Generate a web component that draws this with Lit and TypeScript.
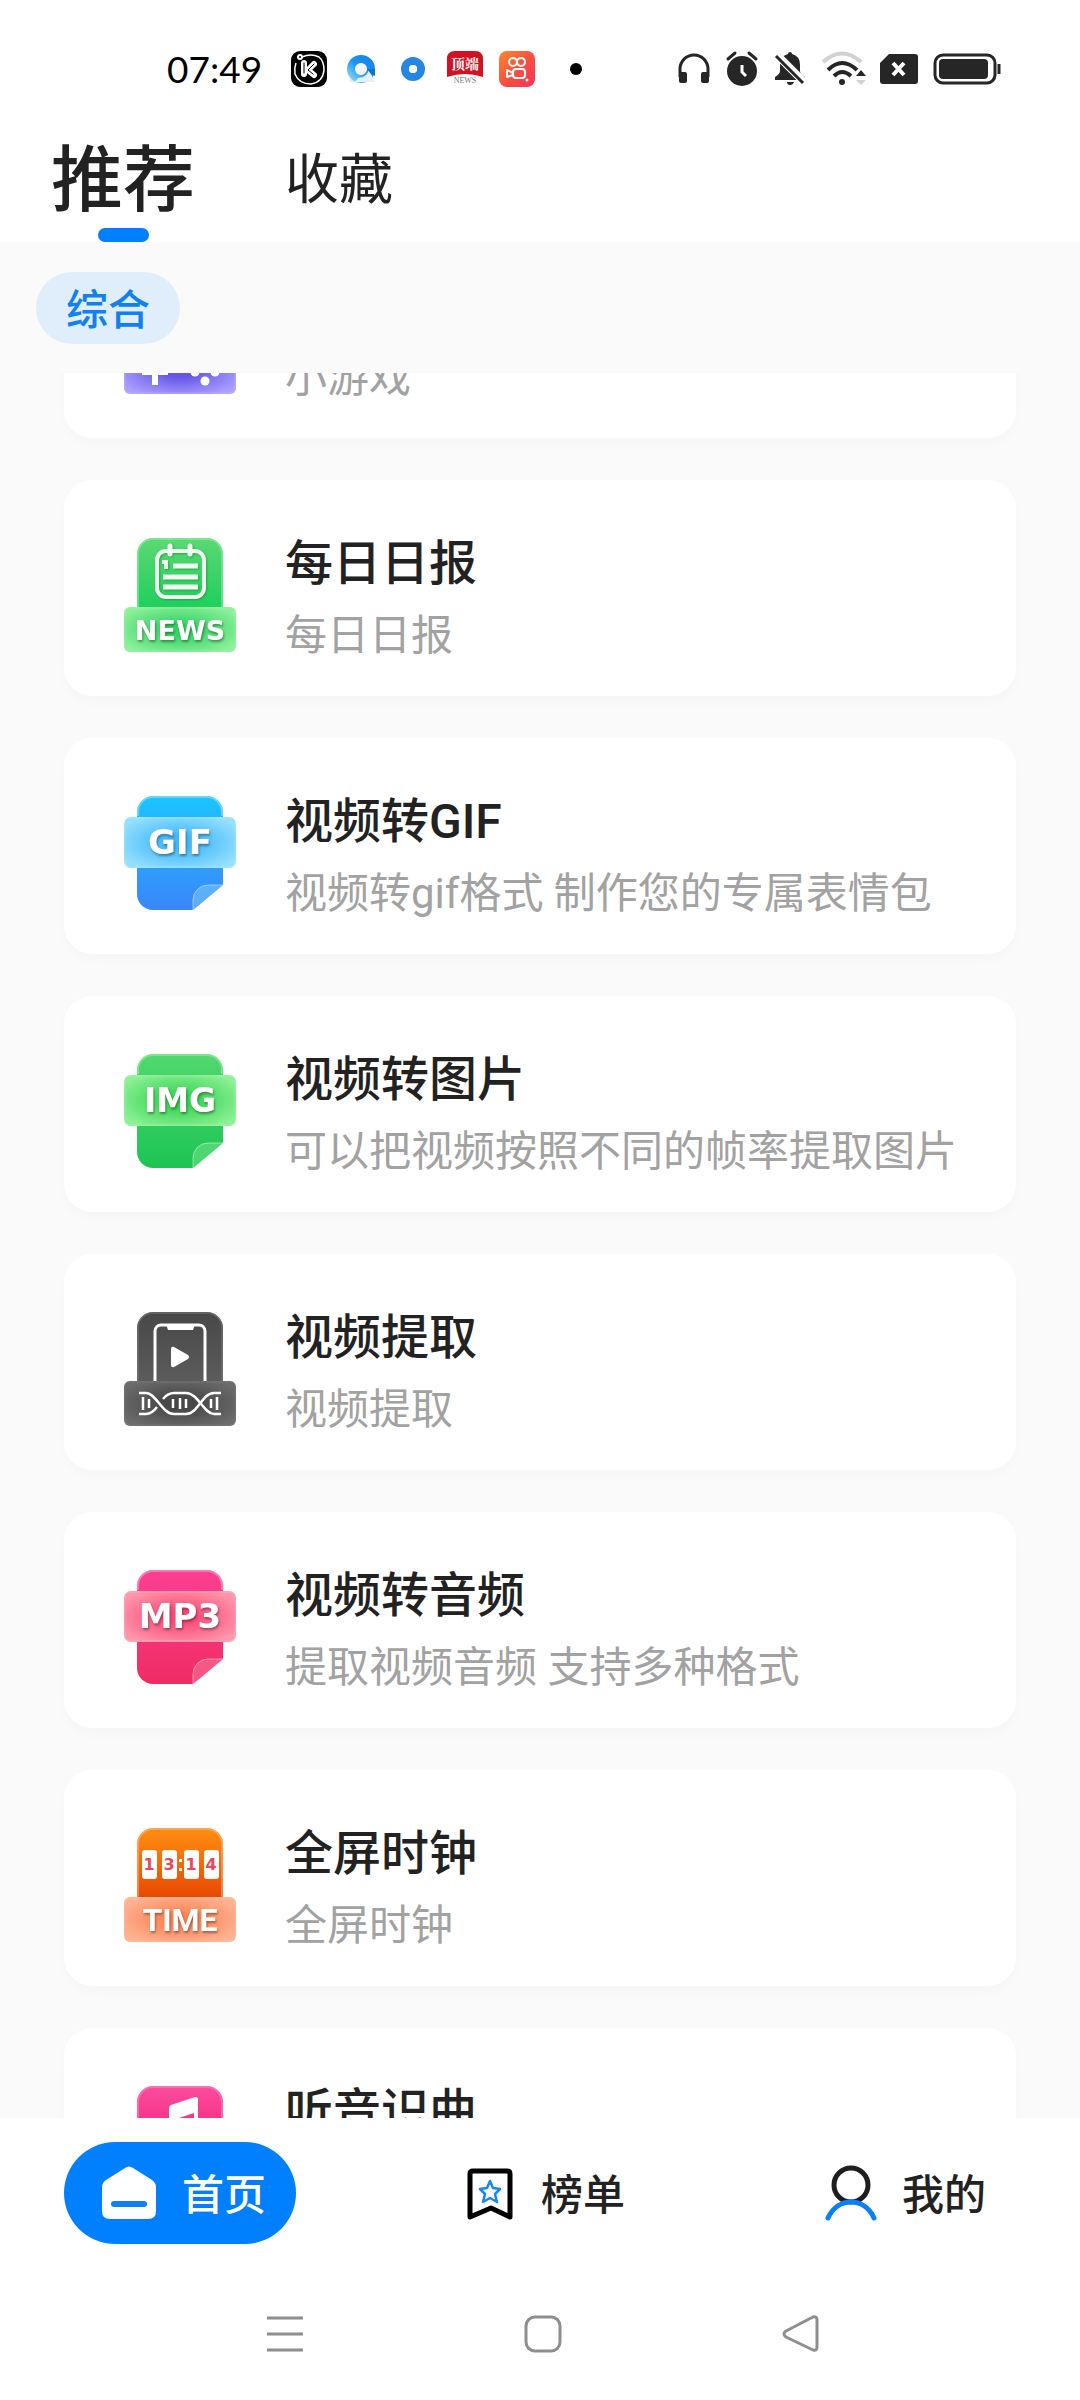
import { LitElement, html, svg, css, SVGTemplateResult } from "lit";
import { customElement, state, query } from "lit/decorators.js";

interface Tool {
  title: string;
  note: string;
  icon: SVGTemplateResult;
}

interface Palette {
  id: string;
  top: string;
  bottom: string;
  edge: string;
  middle: string;
  rim: string;
}

/* Gradients shared by the body and the band of one tile. */
const paints = (p: Palette) => svg`
  <defs>
    <linearGradient id="${p.id}-body" x1="0" y1="0" x2="0" y2="1">
      <stop offset="0" stop-color="${p.top}" />
      <stop offset="1" stop-color="${p.bottom}" />
    </linearGradient>
    <radialGradient id="${p.id}-band" cx="0.5" cy="0.5" r="0.6">
      <stop offset="0.2" stop-color="${p.middle}" />
      <stop offset="1" stop-color="${p.edge}" />
    </radialGradient>
  </defs>`;

/* A file with a folded corner and a label band across it. */
const fileTile = (p: Palette, label: string, size: number) => svg`
  ${paints(p)}
  <path d="M33 0H87A16 16 0 0 1 103 16V89L73 114H33A16 16 0 0 1 17 98V16A16 16 0 0 1 33 0Z" fill="url(#${p.id}-body)" />
  <path d="M18 20V16A15 15 0 0 1 33 1H87A15 15 0 0 1 102 16V20" fill="none" stroke="${p.rim}" stroke-opacity="0.5" stroke-width="2" />
  <path d="M73 114V104A15 15 0 0 1 88 89H103Z" fill="${p.edge}" fill-opacity="0.4" />
  <path d="M73 114V104A15 15 0 0 1 88 89H103" fill="none" stroke="#fff" stroke-opacity="0.45" stroke-width="1" />
  <rect x="4" y="21" width="112" height="51" rx="7" fill="url(#${p.id}-band)" />
  <rect x="5" y="22" width="110" height="49" rx="6" fill="none" stroke="${p.rim}" stroke-opacity="0.6" stroke-width="1" />
  <text class="label" x="60" y="58" font-size="${size}">${label}</text>`;

/* An arched plate standing behind a band. */
const plateTile = (p: Palette, art: SVGTemplateResult) => svg`
  ${paints(p)}
  <path d="M33 0H87A16 16 0 0 1 103 16V72H17V16A16 16 0 0 1 33 0Z" fill="url(#${p.id}-body)" />
  <path d="M18 69V16A15 15 0 0 1 33 1H87A15 15 0 0 1 102 16V69" fill="none" stroke="${p.rim}" stroke-opacity="0.45" stroke-width="2" />
  <rect x="4" y="69" width="112" height="45" rx="6" fill="url(#${p.id}-band)" />
  <rect x="5" y="70" width="110" height="43" rx="5" fill="none" stroke="${p.rim}" stroke-opacity="0.5" stroke-width="1" />
  ${art}`;

const flap = (x: number, digit: string) => svg`
  <rect x="${x}" y="22" width="15" height="29" rx="3" fill="#fff" />
  <text class="digit" x="${x + 7}" y="42">${digit}</text>`;

const tools: Tool[] = [
  {
    title: "小游戏",
    note: "小游戏",
    icon: plateTile(
      { id: "game", top: "#9a8cff", bottom: "#6a55ee", edge: "#aaa0ff", middle: "#6556e6", rim: "#c8c0ff" },
      svg`
        <path d="M35 79V105M22 92H48" stroke="#fff" stroke-width="6" />
        <circle cx="85" cy="82" r="4.500" fill="#fff" /><circle cx="75" cy="92" r="4.500" fill="#fff" />
        <circle cx="95" cy="92" r="4.500" fill="#fff" /><circle cx="85" cy="101" r="4.500" fill="#fff" />`,
    ),
  },
  {
    title: "每日日报",
    note: "每日日报",
    icon: plateTile(
      { id: "news", top: "#5bd873", bottom: "#1dcf5c", edge: "#8df09a", middle: "#35d367", rim: "#a4f5b0" },
      svg`
        <g class="art">
          <rect x="37" y="13" width="47" height="46" rx="9" fill="none" stroke="#f0fff2" stroke-width="4" />
          <path d="M50 8V16M70 8V16" stroke="#f0fff2" stroke-width="5" stroke-linecap="round" />
          <path d="M53 28H78M43 39H78M43 49H78" stroke="#f0fff2" stroke-width="5" />
          <path d="M42 24H46V31" fill="none" stroke="#f0fff2" stroke-width="4" />
        </g>
        <text class="label" x="60" y="102" font-size="27">NEWS</text>`,
    ),
  },
  {
    title: "视频转GIF",
    note: "视频转gif格式 制作您的专属表情包",
    icon: fileTile({ id: "gif", top: "#1cc4ff", bottom: "#3a86fa", edge: "#96e0fd", middle: "#40b8fb", rim: "#a5ecff" }, "GIF", 34),
  },
  {
    title: "视频转图片",
    note: "可以把视频按照不同的帧率提取图片",
    icon: fileTile({ id: "img", top: "#52d86e", bottom: "#1cc454", edge: "#8df095", middle: "#38d554", rim: "#a8f5b0" }, "IMG", 33),
  },
  {
    title: "视频提取",
    note: "视频提取",
    icon: plateTile(
      { id: "extract", top: "#484848", bottom: "#5c5c5c", edge: "#6c6c6c", middle: "#474747", rim: "#808080" },
      svg`
        <path d="M35 69V19A6 6 0 0 1 41 13H79A6 6 0 0 1 85 19V69" fill="none" stroke="#fff" stroke-width="3" />
        <path d="M46 12H75L73 18H48Z" fill="#fff" />
        <path d="M51 37Q51 34 54 35L68 43Q70 45 68 47L54 55Q51 56 51 53Z" fill="#fff" />
        <g fill="none" stroke="#fff" stroke-width="2.500">
          <path d="M19 81H26C36 81 42 102 54 102H66C78 102 82 81 94 81H101" />
          <path d="M19 102H26C30 102 34 99 37 95M43 87C46 83 50 81 54 81H66C78 81 84 102 94 102H101" />
          <path d="M23 85V98M29 87V96M53 87V96M60 86V97M66 87V96M91 87V96M97 85V98" />
        </g>`,
    ),
  },
  {
    title: "视频转音频",
    note: "提取视频音频 支持多种格式",
    icon: fileTile({ id: "mp3", top: "#fb3f93", bottom: "#f02c63", edge: "#ff97ab", middle: "#fa4a78", rim: "#ffb4c4" }, "MP3", 34),
  },
  {
    title: "全屏时钟",
    note: "全屏时钟",
    icon: plateTile(
      { id: "time", top: "#ff8f12", bottom: "#e84600", edge: "#ffb496", middle: "#fb8454", rim: "#ffc4a0" },
      svg`
        ${flap(22, "1")}${flap(42, "3")}${flap(64, "1")}${flap(84, "4")}
        <rect x="59" y="31" width="3" height="3" fill="#fff" /><rect x="59" y="40" width="3" height="3" fill="#fff" />
        <text class="label narrow" x="60" y="103" font-size="32">TIME</text>`,
    ),
  },
  {
    title: "听音识曲",
    note: "听音识曲",
    icon: plateTile(
      { id: "song", top: "#fb4ca0", bottom: "#f51c6c", edge: "#ff9ab4", middle: "#fb4a80", rim: "#ff9acb" },
      svg`
        <path d="M49 22Q49 20 51 19L75 11Q78 11 78 13V52H74V27L53 34V60H49Z" fill="#fff" />
        <circle cx="45" cy="60" r="8" fill="#fff" /><circle cx="70" cy="53" r="8" fill="#fff" />`,
    ),
  },
];

const homeIcon = svg`
  <path d="M23 2Q27 -1 31 2L50 14Q54 17 54 21V45Q54 53 46 53H8Q0 53 0 45V21Q0 17 4 14Z" fill="#fff" />
  <path d="M12 38H42" stroke="#0f80f2" stroke-width="6" stroke-linecap="round" />`;

const rankIcon = svg`
  <path d="M6 5H40Q43 5 43 8V51L24 42L3 51V8Q3 5 6 5Z" fill="none" stroke="#000" stroke-width="5" stroke-linejoin="round" />
  <path d="M23 15L26 22L33 23L28 28L30 36L23 32L16 36L18 28L13 23L20 22Z" fill="none" stroke="#1687f5" stroke-width="2.500" stroke-linejoin="round" />`;

const mineIcon = svg`
  <circle cx="25" cy="19" r="17" fill="none" stroke="#1e1e1e" stroke-width="5" />
  <path d="M2 52C7 41 16 36 25 36S43 41 48 52" fill="none" stroke="#0a80f8" stroke-width="5" stroke-linecap="round" />`;

const sections = [
  { name: "首页", icon: homeIcon, box: "0 0 54 54", kind: "wide" },
  { name: "榜单", icon: rankIcon, box: "0 0 48 54", kind: "slim" },
  { name: "我的", icon: mineIcon, box: "0 0 50 54", kind: "medium" },
];

@customElement("status-bar")
export class StatusBar extends LitElement {
  static styles = css`
    :host { display: block; }
    .bar { display: flex; align-items: center; justify-content: space-between; height: 138px; padding: 0 80px 0 167px; box-sizing: border-box; }
    .group { display: flex; align-items: center; }
    .apps { gap: 16px; }
    .signals { gap: 12px; }
    .clock { font: 400 37px/48px Lato, "Open Sans", sans-serif; color: #000; width: 108px; }
    svg { display: block; height: 36px; width: 36px; flex: none; overflow: visible; }
    .more { width: 50px; }
    .wifi { width: 48px; }
    .sim { width: 38px; }
    .battery { width: 70px; }
    .brand { font: 700 14px "Noto Serif CJK SC", "Noto Sans CJK SC", serif; text-anchor: middle; fill: #fff; }
    .press { font: 400 8px "Liberation Serif", serif; text-anchor: middle; fill: #777; }
  `;

  render() {
    return html`
      <div class="bar">
        <div class="group apps">
          <time class="clock">07:49</time>
          <svg viewBox="0 0 36 36" aria-hidden="true">
            <rect width="36" height="36" rx="9" fill="#000" />
            <path d="M11 6Q20 2 28 6Q33 10 33 19Q32 31 20 33Q8 33 4 23Q3 17 5 12" fill="none" stroke="#fff" stroke-width="1.500" />
            <circle cx="9" cy="6" r="3" fill="#fff" /><circle cx="9" cy="6" r="1" fill="#000" />
            <path d="M13 12V23M23 13L17 19L23 24" fill="none" stroke="#fff" stroke-width="6" stroke-linecap="round" stroke-linejoin="round" />
            <path d="M13 12V22M23 13L17 19L22 23" fill="none" stroke="#000" stroke-width="1" stroke-linecap="round" />
          </svg>
          <svg viewBox="0 0 36 36" aria-hidden="true">
            <defs><linearGradient id="q" x1="0" y1="1" x2="1" y2="0"><stop offset="0" stop-color="#7fd2f7" /><stop offset="0.500" stop-color="#1c93f2" /><stop offset="1" stop-color="#1586f0" /></linearGradient></defs>
            <path d="M8 28Q20 24 31 31H8Q4 30 8 28Z" fill="#dceefa" />
            <circle cx="18" cy="18" r="10" fill="none" stroke="url(#q)" stroke-width="8" />
            <path d="M15 27Q23 27 26 19L32 31H12Z" fill="#e4f1fb" />
            <path d="M24 18H32V25L28 23Z" fill="#1470cf" />
            <circle cx="18" cy="18" r="5" fill="#f2f6fa" />
          </svg>
          <svg viewBox="0 0 36 36" aria-hidden="true">
            <circle cx="18" cy="18" r="8" fill="none" stroke="#2587e4" stroke-width="8" />
            <circle cx="18" cy="18" r="4" fill="#fff" />
          </svg>
          <svg viewBox="0 0 36 36" aria-hidden="true">
            <path d="M8 0H28Q36 0 36 8V26Q18 20 0 26V8Q0 0 8 0Z" fill="#cf1322" />
            <text class="brand" x="18" y="18">顶端</text>
            <text class="press" x="18" y="32">NEWS</text>
          </svg>
          <svg viewBox="0 0 36 36" aria-hidden="true">
            <defs><linearGradient id="k" x1="0" y1="0" x2="1" y2="1"><stop offset="0" stop-color="#fb8a2a" /><stop offset="0.500" stop-color="#f95040" /><stop offset="1" stop-color="#f5305c" /></linearGradient></defs>
            <rect width="36" height="36" rx="8" fill="url(#k)" />
            <g fill="none" stroke="#fff" stroke-width="2">
              <circle cx="14" cy="11" r="4" /><circle cx="22" cy="11" r="4" />
              <rect x="14" y="18" width="12" height="9" rx="3" />
              <path d="M14 22L8 19V26L14 24" stroke-linejoin="round" />
            </g>
            <circle cx="28" cy="29" r="1.500" fill="#fff" />
          </svg>
          <svg class="more" viewBox="0 0 50 36" aria-hidden="true"><circle cx="25" cy="18" r="6" fill="#000" /></svg>
        </div>
        <div class="group signals">
          <svg viewBox="0 0 36 36" aria-hidden="true">
            <path d="M4 26V18A14 14 0 0 1 32 18V26" fill="none" stroke="#262626" stroke-width="3" />
            <rect x="3" y="21" width="8" height="11" rx="2" fill="#262626" /><rect x="25" y="21" width="8" height="11" rx="2" fill="#262626" />
          </svg>
          <svg viewBox="0 0 36 36" aria-hidden="true">
            <circle cx="18" cy="20" r="15" fill="#262626" />
            <path d="M4 8L11 2M32 8L25 2" stroke="#262626" stroke-width="3" stroke-linecap="round" />
            <path d="M18 14V21L22 25" fill="none" stroke="#fff" stroke-width="3" />
          </svg>
          <svg viewBox="0 0 36 36" aria-hidden="true">
            <path d="M18 1Q20 1 20 3Q28 5 28 14V20Q28 23 33 26V29H3V26Q8 23 8 20V14Q8 5 16 3Q16 1 18 1Z" fill="#262626" />
            <path d="M15 31H22Q21 34 18 34T15 31Z" fill="#262626" />
            <path d="M3 2L34 33" stroke="#fff" stroke-width="8" />
            <path d="M4 5L31 32" stroke="#262626" stroke-width="3" />
          </svg>
          <svg class="wifi" viewBox="0 0 48 36" aria-hidden="true">
            <path d="M3 11Q22 -6 41 11" fill="none" stroke="#d2d2d2" stroke-width="4" />
            <path d="M8 19Q22 5 37 19" fill="none" stroke="#262626" stroke-width="4" />
            <path d="M14 25Q22 17 31 25" fill="none" stroke="#262626" stroke-width="4" />
            <circle cx="22" cy="31" r="3" fill="#262626" />
            <path d="M36 25L41 19L46 25Z" fill="#262626" /><path d="M36 29L41 34L46 29Z" fill="#d2d2d2" />
          </svg>
          <svg class="sim" viewBox="0 0 38 36" aria-hidden="true">
            <path d="M9 3H35Q38 3 38 6V30Q38 33 35 33H3Q0 33 0 30V12Z" fill="#262626" />
            <path d="M13 12L24 24M24 12L13 24" stroke="#fff" stroke-width="4" />
          </svg>
          <svg class="battery" viewBox="0 0 70 36" aria-hidden="true">
            <rect x="5" y="4" width="60" height="28" rx="8" fill="none" stroke="#262626" stroke-width="3" />
            <rect x="9" y="8" width="49" height="20" rx="4" fill="#262626" />
            <path d="M69 13V23" stroke="#262626" stroke-width="3" />
          </svg>
        </div>
      </div>`;
  }
}

@customElement("tool-card")
export class ToolCard extends LitElement {
  static properties = { tool: { attribute: false } };
  declare tool: Tool;

  static styles = css`
    :host { display: block; }
    .card { display: flex; align-items: flex-start; gap: 45px; padding: 48px 40px 24px 56px; border-radius: 28px; background: #fff; box-shadow: 0 6px 12px rgba(0, 0, 0, 0.02); color: #222; text-decoration: none; }
    .icon { display: block; flex: none; width: 120px; height: 120px; margin-top: 10px; overflow: visible; }
    .words { min-width: 0; font-family: Roboto, "Noto Sans CJK SC", sans-serif; }
    .title { margin: 0; font-size: 48px; line-height: 72px; font-weight: 500; }
    .note { margin: 0; font-size: 42px; line-height: 72px; font-weight: 400; color: #a2a2a2; white-space: nowrap; overflow: hidden; text-overflow: ellipsis; }
    .label { font-family: "DejaVu Sans", sans-serif; font-weight: 700; text-anchor: middle; fill: #fff; filter: drop-shadow(1px 2px 1px rgba(0, 0, 0, 0.35)); }
    .narrow { font-family: Roboto, sans-serif; }
    .digit { font: 700 16px "DejaVu Sans", sans-serif; text-anchor: middle; fill: #ee4557; }
    .art { filter: drop-shadow(1px 1px 1px rgba(0, 80, 20, 0.35)); }
  `;

  render() {
    return html`
      <a class="card" href="#">
        <svg class="icon" viewBox="0 0 120 120" aria-hidden="true">${this.tool.icon}</svg>
        <div class="words">
          <h2 class="title">${this.tool.title}</h2>
          <p class="note">${this.tool.note}</p>
        </div>
      </a>`;
  }
}

@customElement("app-root")
export class AppRoot extends LitElement {
  @state() private tab = "推荐";
  @state() private section = "首页";
  @query(".list") private list!: HTMLElement;

  static styles = css`
    :host { display: block; font-family: Roboto, "Noto Sans CJK SC", sans-serif; color: #222; }
    .screen { display: flex; flex-direction: column; height: 100vh; background: #fafafa; }
    button { border: 0; margin: 0; padding: 0; background: none; font: inherit; color: inherit; cursor: pointer; }
    .top { background: #fff; flex: none; }
    .tabs { display: flex; gap: 90px; padding: 3px 51px 0; }
    .tab { display: flex; flex-direction: column; align-items: center; gap: 7px; font-size: 54px; line-height: 80px; }
    .tab::after { content: ""; width: 51px; height: 14px; border-radius: 7px; }
    .tab.on { font-size: 72px; font-weight: 500; }
    .tab.on::after { background: #0080ff; }
    .filters { display: flex; flex: none; padding: 30px 36px 29px; }
    .chip { height: 72px; padding: 6px 30px 0; border-radius: 36px; background: #e0eefc; color: #1080f5; font-size: 42px; line-height: 66px; font-weight: 500; }
    .list { flex: 1; min-height: 0; overflow-y: auto; scrollbar-width: none; display: flex; flex-direction: column; gap: 42px; padding: 0 64px; margin: 0; list-style: none; }
    .list::-webkit-scrollbar { display: none; }
    .item { flex: none; }
    .bottom { flex: none; background: #fff; }
    .sections { display: flex; justify-content: space-between; padding: 24px 64px; }
    .section { display: flex; align-items: center; gap: 26px; height: 102px; padding: 0 30px 0 38px; border-radius: 51px; font-size: 42px; font-weight: 500; line-height: 60px; }
    .section.on { background: #0080ff; color: #fff; }
    .name { padding-top: 6px; }
    .glyph { display: block; height: 54px; overflow: visible; }
    .wide { width: 54px; }
    .slim { width: 48px; }
    .medium { width: 50px; }
    .keys { display: flex; justify-content: space-between; padding: 48px 262px 48px 267px; }
    .key { display: block; width: 36px; height: 36px; }
    .key svg { display: block; width: 36px; height: 36px; overflow: visible; fill: none; stroke: #8e8e8e; stroke-width: 3; stroke-linejoin: round; }
  `;

  firstUpdated() {
    requestAnimationFrame(() => {
      this.list.scrollTop = 151;
    });
  }

  render() {
    return html`
      <div class="screen">
        <header class="top">
          <status-bar></status-bar>
          <nav class="tabs">
            ${["推荐", "收藏"].map(
              (name) => html`<button class="tab ${name === this.tab ? "on" : ""}" @click=${() => (this.tab = name)}>${name}</button>`,
            )}
          </nav>
        </header>
        <div class="filters"><button class="chip">综合</button></div>
        <ul class="list">
          ${tools.map((tool) => html`<li class="item"><tool-card .tool=${tool}></tool-card></li>`)}
        </ul>
        <footer class="bottom">
          <nav class="sections">
            ${sections.map(
              (s) => html`
                <button class="section ${s.name === this.section ? "on" : ""}" @click=${() => (this.section = s.name)}>
                  <svg class="glyph ${s.kind}" viewBox="${s.box}" aria-hidden="true">${s.icon}</svg>
                  <span class="name">${s.name}</span>
                </button>`,
            )}
          </nav>
          <div class="keys">
            <button class="key" aria-label="最近任务"><svg viewBox="0 0 36 36"><path d="M0 2H36M0 18H36M0 34H36" /></svg></button>
            <button class="key" aria-label="主屏幕"><svg viewBox="0 0 36 36"><rect x="1" y="1" width="34" height="34" rx="9" /></svg></button>
            <button class="key" aria-label="返回"><svg viewBox="0 0 36 36"><path d="M31 1L4 15Q0 18 4 21L31 34Q35 35 35 31V4Q35 0 31 1Z" /></svg></button>
          </div>
        </footer>
      </div>`;
  }
}
